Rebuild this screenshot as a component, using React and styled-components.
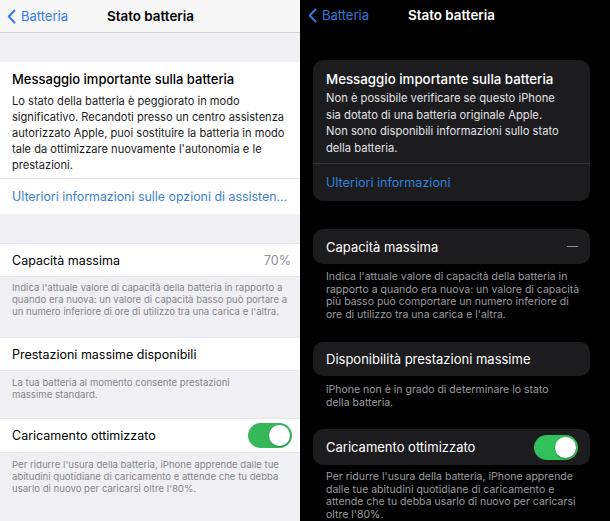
import styled, { createGlobalStyle } from "styled-components"

const Global = createGlobalStyle`
  html, body { margin: 0; padding: 0; }
  body {
    font-family: Inter, "Liberation Sans", Arial, sans-serif;
    -webkit-font-smoothing: antialiased;
  }
`

const Page = styled.div`
  display: flex;
  width: 610px;
  height: 521px;
  overflow: hidden;
`

/* ---------- light (left) ---------- */

const Light = styled.div`
  width: 300px;
  background: #efeff4;
  display: flex;
  flex-direction: column;
  overflow: hidden;
`

const LightNav = styled.div`
  height: 33px;
  box-sizing: border-box;
  background: #f7f7f8;
  border-bottom: 1px solid #d4d4d8;
  display: flex;
  align-items: center;
  padding: 0 0 0 7px;
`

const Back = styled.div`
  display: flex;
  align-items: center;
  gap: 5px;
  color: ${p => p.dark ? "#2f7ad8" : "#3478f6"};
  font-size: 13px;
  width: 100px;
`

const NavTitle = styled.div`
  font-size: 13.4px;
  font-weight: 600;
  color: ${p => p.dark ? "#fff" : "#000"};
`

const LightCard = styled.div`
  background: #fff;
  margin-top: ${p => p.top}px;
`

const LightMessage = styled.div`
  padding: 9px 12px 5px;
  border-bottom: 1px solid #e2e2e6;
`

const MsgTitle = styled.div`
  font-size: ${p => p.dark ? "13.3px" : "13px"};
  font-weight: 500;
  line-height: 16px;
  color: ${p => p.dark ? "#fff" : "#000"};
`

const MsgBody = styled.div`
  font-size: ${p => p.dark ? "11.2px" : "11.1px"};
  line-height: ${p => p.dark ? "16.5px" : "16px"};
  color: ${p => p.dark ? "#e2e2e6" : "#1c1c1e"};
  margin-top: ${p => p.dark ? "3px" : "6px"};
  white-space: pre;
`

const LightLink = styled.div`
  height: 35px;
  display: flex;
  align-items: center;
  padding: 0 12px;
  font-size: 12.4px;
  color: #3a7fd6;
`

const LightRow = styled.div`
  background: #fff;
  height: ${p => p.h || 34}px;
  box-sizing: border-box;
  border-top: 1px solid #e6e6ea;
  border-bottom: 1px solid #e6e6ea;
  display: flex;
  align-items: center;
  justify-content: space-between;
  padding: 0 8px 0 12px;
  margin-top: ${p => p.top || 0}px;
`

const RowLabel = styled.div`
  font-size: ${p => p.dark ? "13px" : "12.5px"};
  color: ${p => p.dark ? "#fff" : "#000"};
`

const RowValue = styled.div`
  font-size: 12.5px;
  color: #8e8e93;
  padding-right: 1px;
`

const Footer = styled.div`
  font-size: ${p => p.dark ? "10.5px" : "9.6px"};
  line-height: ${p => p.dark ? "12.5px" : "12px"};
  color: ${p => p.dark ? "#9c9ca1" : "#86868b"};
  padding: ${p => p.pad};
  white-space: pre;
`

const Toggle = styled.div`
  width: 44px;
  height: 25px;
  border-radius: 13px;
  background: ${p => p.dark ? "#32c05a" : "#36b85a"};
  position: relative;
  flex-shrink: 0;
  &::after {
    content: "";
    position: absolute;
    right: 2px;
    top: 2px;
    width: 21px;
    height: 21px;
    border-radius: 50%;
    background: #fff;
    box-shadow: 0 1px 2px rgba(0, 0, 0, 0.25);
  }
`

/* ---------- dark (right) ---------- */

const Dark = styled.div`
  width: 310px;
  background: #000;
  display: flex;
  flex-direction: column;
  overflow: hidden;
`

const DarkNav = styled.div`
  height: 30px;
  display: flex;
  align-items: center;
  padding-left: 8px;
`

const DarkCard = styled.div`
  background: #1c1c1e;
  border-radius: 10px;
  margin: ${p => p.top}px 20px 0 13px;
  overflow: hidden;
`

const DarkMessage = styled.div`
  padding: 11px 13px 7px;
  border-bottom: 1px solid #333336;
`

const DarkLink = styled.div`
  height: 37px;
  display: flex;
  align-items: center;
  padding: 0 13px;
  font-size: 12.6px;
  color: #3280dc;
`

const DarkRow = styled.div`
  height: ${p => p.h || 35}px;
  display: flex;
  align-items: center;
  justify-content: space-between;
  padding: 0 12px 0 13px;
`

const Dash = styled.div`
  width: 11px;
  height: 1.5px;
  background: #8e8e93;
`

const Chevron = ({ color }) => (
  <svg width="9" height="15" viewBox="0 0 9 15">
    <path d="M7.5 1.5 L1.8 7.5 L7.5 13.5" fill="none" stroke={color} strokeWidth="2" strokeLinecap="round" strokeLinejoin="round" />
  </svg>
)

const App = () => {
  return (
    <Page>
      <Global />
      <Light>
        <LightNav>
          <Back>
            <Chevron color="#3478f6" />
            Batteria
          </Back>
          <NavTitle>Stato batteria</NavTitle>
        </LightNav>
        <LightCard top={29}>
          <LightMessage>
            <MsgTitle>Messaggio importante sulla batteria</MsgTitle>
            <MsgBody>
              {"Lo stato della batteria è peggiorato in modo\nsignificativo. Recandoti presso un centro assistenza\nautorizzato Apple, puoi sostituire la batteria in modo\ntale da ottimizzare nuovamente l'autonomia e le\nprestazioni."}
            </MsgBody>
          </LightMessage>
          <LightLink>Ulteriori informazioni sulle opzioni di assisten...</LightLink>
        </LightCard>
        <LightRow top={29}>
          <RowLabel>Capacità massima</RowLabel>
          <RowValue>70%</RowValue>
        </LightRow>
        <Footer pad="5px 12px 19px">
          {"Indica l'attuale valore di capacità della batteria in rapporto a\nquando era nuova: un valore di capacità basso può portare a\nun numero inferiore di ore di utilizzo tra una carica e l'altra."}
        </Footer>
        <LightRow>
          <RowLabel>Prestazioni massime disponibili</RowLabel>
        </LightRow>
        <Footer pad="6px 12px 17px">
          {"La tua batteria al momento consente prestazioni\nmassime standard."}
        </Footer>
        <LightRow h={35}>
          <RowLabel>Caricamento ottimizzato</RowLabel>
          <Toggle />
        </LightRow>
        <Footer pad="6px 12px 0">
          {"Per ridurre l'usura della batteria, iPhone apprende dalle tue\nabitudini quotidiane di caricamento e attende che tu debba\nusarlo di nuovo per caricarsi oltre l'80%."}
        </Footer>
      </Light>

      <Dark>
        <DarkNav>
          <Back dark>
            <Chevron color="#2f7ad8" />
            Batteria
          </Back>
          <NavTitle dark>Stato batteria</NavTitle>
        </DarkNav>
        <DarkCard top={30}>
          <DarkMessage>
            <MsgTitle dark>Messaggio importante sulla batteria</MsgTitle>
            <MsgBody dark>
              {"Non è possibile verificare se questo iPhone\nsia dotato di una batteria originale Apple.\nNon sono disponibili informazioni sullo stato\ndella batteria."}
            </MsgBody>
          </DarkMessage>
          <DarkLink>Ulteriori informazioni</DarkLink>
        </DarkCard>
        <DarkCard top={28}>
          <DarkRow>
            <RowLabel dark>Capacità massima</RowLabel>
            <Dash />
          </DarkRow>
        </DarkCard>
        <Footer dark pad="7px 20px 21px 26px">
          {"Indica l'attuale valore di capacità della batteria in\nrapporto a quando era nuova: un valore di capacità\npiù basso può comportare un numero inferiore di\nore di utilizzo tra una carica e l'altra."}
        </Footer>
        <DarkCard top={0}>
          <DarkRow h={34}>
            <RowLabel dark>Disponibilità prestazioni massime</RowLabel>
          </DarkRow>
        </DarkCard>
        <Footer dark pad="8px 20px 20px 26px">
          {"iPhone non è in grado di determinare lo stato\ndella batteria."}
        </Footer>
        <DarkCard top={0}>
          <DarkRow h={36}>
            <RowLabel dark>Caricamento ottimizzato</RowLabel>
            <Toggle dark />
          </DarkRow>
        </DarkCard>
        <Footer dark pad="6px 20px 0 26px">
          {"Per ridurre l'usura della batteria, iPhone apprende\ndalle tue abitudini quotidiane di caricamento e\nattende che tu debba usarlo di nuovo per caricarsi\noltre l'80%."}
        </Footer>
      </Dark>
    </Page>
  )
}

export default App
